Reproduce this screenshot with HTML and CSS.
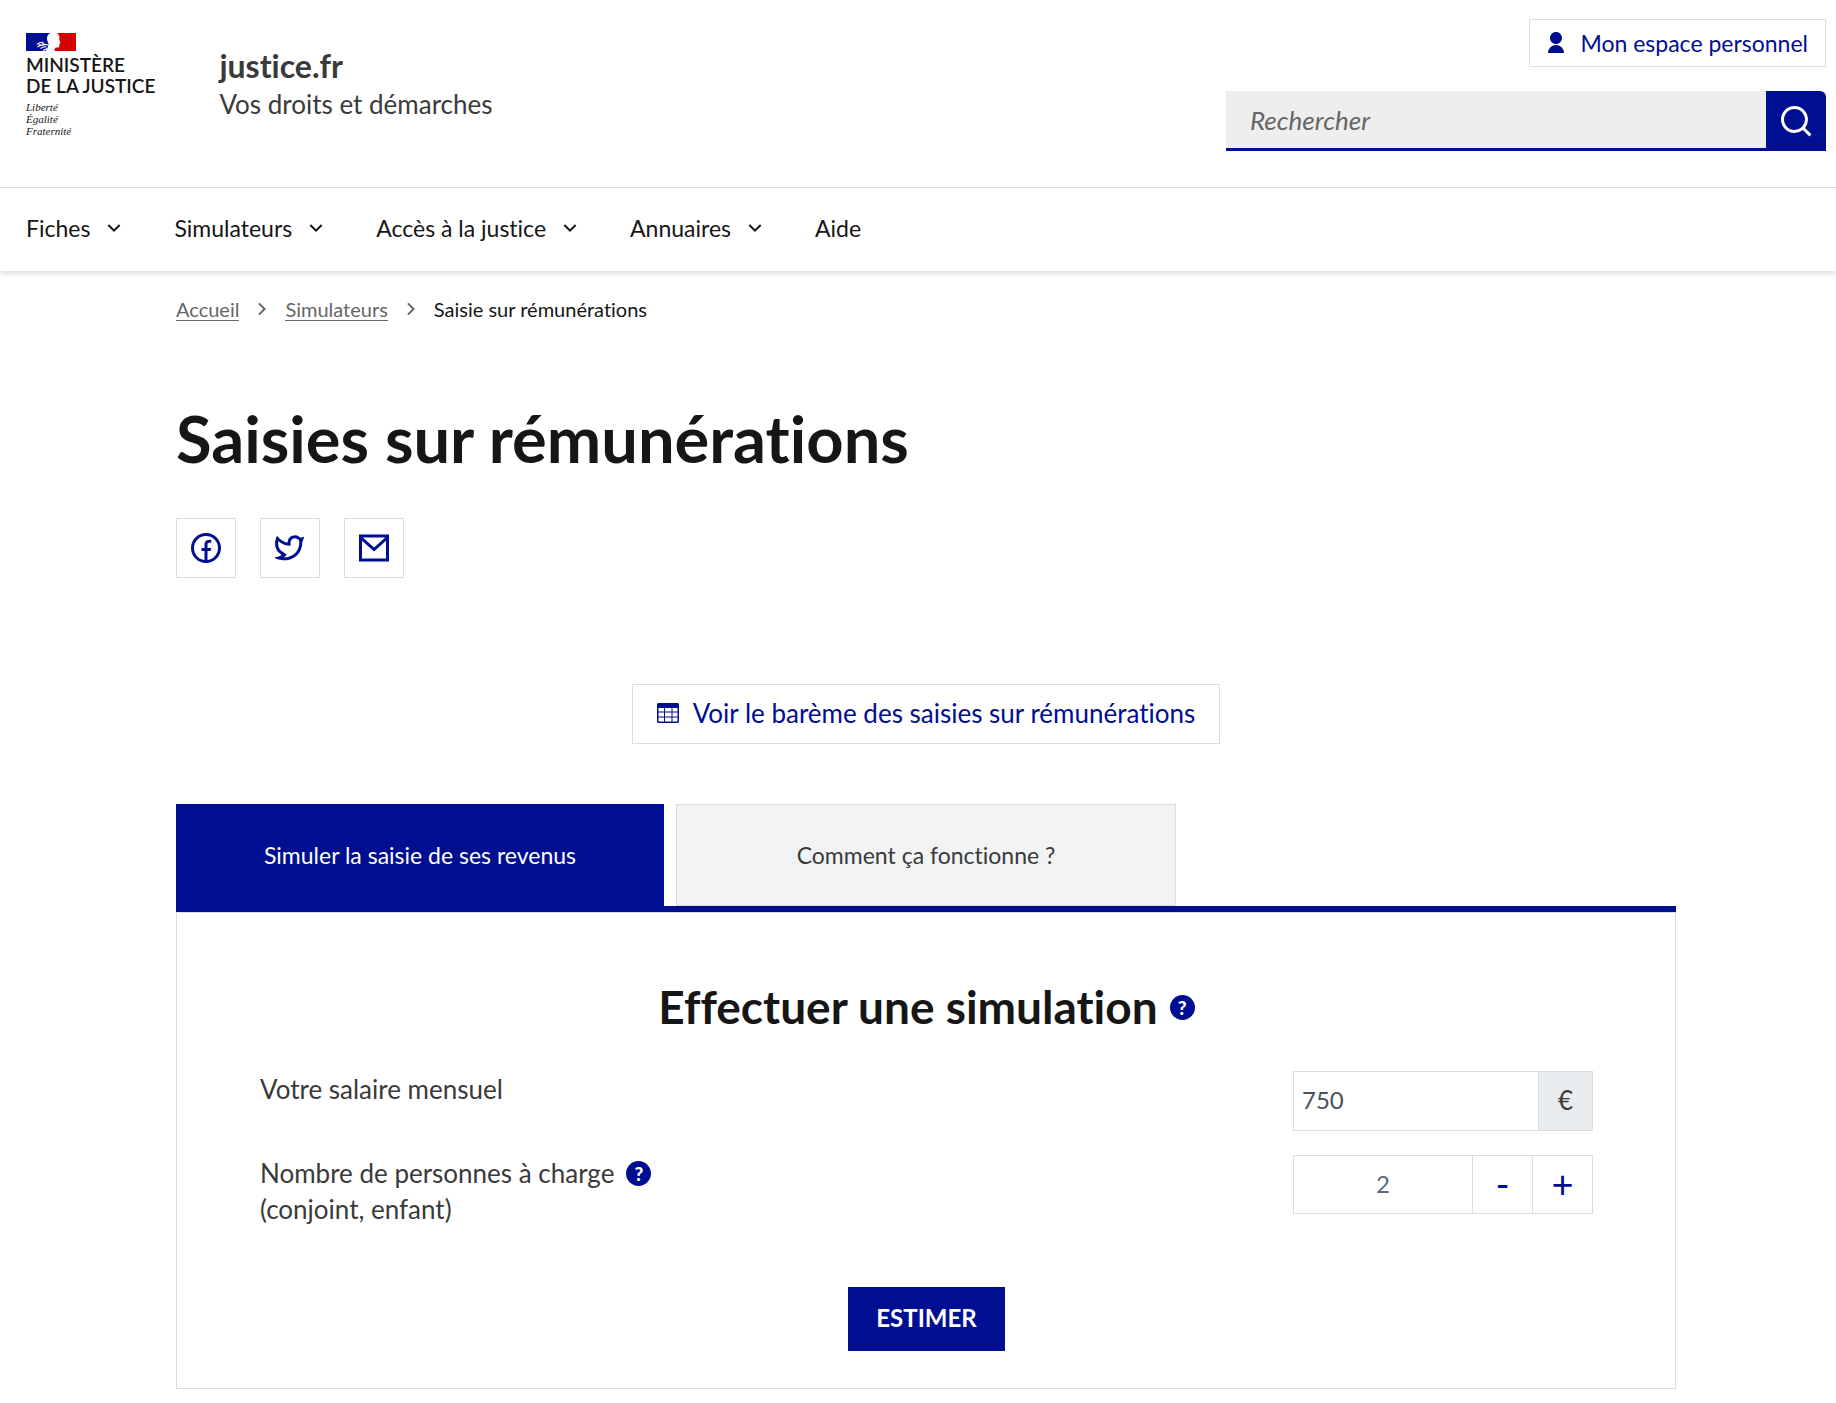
FILE: index.html
```html
<!DOCTYPE html>
<html lang="fr">
<head>
  <meta charset="UTF-8">
  <meta name="viewport" content="width=device-width, initial-scale=1">
  <title>Saisies sur rémunérations | justice.fr</title>
  <link rel="stylesheet" href="styles.css">
</head>
<body>

  <header class="header">
    <div class="header-body">
      <div class="brand">
        <div class="logo">
          <svg class="flag" viewBox="0 0 50 18" aria-hidden="true">
            <path fill="#000e91" d="M0 0h24c-2 1.500-3.300 3.500-3 6 .2 2 1.200 3.500 1.500 5l-1 4-2 3H0z"/>
            <path fill="#d90000" d="M50 0v18H28.500c-.3-1.500.3-3 1.500-3.500 1.500-.3 3 .2 3.300-.8l-.2-1.500.7-.8-.3-1.200 1-.7-1.300-2.700.3-2.300C33.300 2.500 32.500 1 31 0z"/>
            <path fill="none" stroke="#fff" stroke-width="1.100" d="M11 11.500c2-2 4-2.500 6.500-2.200M11.500 14c2-2 4-2.500 8-2M13 11.500l3.500 1M14.500 15.500c2-1.500 4-2 6-1.500M16 10.500l6 1.500M17 17.500l4-2"/>
          </svg>
          <p class="ministry">MINISTÈRE<br>DE LA JUSTICE</p>
          <p class="motto">Liberté<br>Égalité<br>Fraternité</p>
        </div>
        <div class="service">
          <p class="service-title">justice.fr</p>
          <p class="service-tagline">Vos droits et démarches</p>
        </div>
      </div>

      <div class="tools">
        <a class="account" href="#">
          <svg class="icon-24" viewBox="0 0 24 24" aria-hidden="true"><path d="M4 22a8 8 0 1 1 16 0H4zm8-9c-3.315 0-6-2.685-6-6s2.685-6 6-6 6 2.685 6 6-2.685 6-6 6z"/></svg>
          Mon espace personnel
        </a>
        <form class="search">
          <input type="search" placeholder="Rechercher" aria-label="Rechercher">
          <button type="button" aria-label="Lancer la recherche">
            <svg class="icon-36" viewBox="0 0 24 24" aria-hidden="true"><path d="M18.031 16.617l4.283 4.282-1.415 1.415-4.282-4.283A8.960 8.960 0 0 1 11 20c-4.968 0-9-4.032-9-9s4.032-9 9-9 9 4.032 9 9a8.960 8.960 0 0 1-1.969 5.617zm-2.006-.742A6.977 6.977 0 0 0 18 11c0-3.868-3.133-7-7-7-3.868 0-7 3.132-7 7 0 3.867 3.132 7 7 7a6.977 6.977 0 0 0 4.875-1.975l.15-.15z"/></svg>
          </button>
        </form>
      </div>
    </div>

    <nav class="nav" aria-label="Menu principal">
      <button type="button">Fiches <svg class="icon-24" viewBox="0 0 24 24"><path d="M12 13.172l4.950-4.950 1.414 1.414L12 16 5.636 9.636 7.050 8.222z"/></svg></button>
      <button type="button">Simulateurs <svg class="icon-24" viewBox="0 0 24 24"><path d="M12 13.172l4.950-4.950 1.414 1.414L12 16 5.636 9.636 7.050 8.222z"/></svg></button>
      <button type="button">Accès à la justice <svg class="icon-24" viewBox="0 0 24 24"><path d="M12 13.172l4.950-4.950 1.414 1.414L12 16 5.636 9.636 7.050 8.222z"/></svg></button>
      <button type="button">Annuaires <svg class="icon-24" viewBox="0 0 24 24"><path d="M12 13.172l4.950-4.950 1.414 1.414L12 16 5.636 9.636 7.050 8.222z"/></svg></button>
      <a href="#">Aide</a>
    </nav>
  </header>

  <main class="container">
    <nav class="breadcrumb" aria-label="Fil d'Ariane">
      <a href="#">Accueil</a>
      <svg class="icon-24" viewBox="0 0 24 24"><path d="M13.172 12l-4.950-4.950 1.414-1.414L16 12l-6.364 6.364-1.414-1.414z"/></svg>
      <a href="#">Simulateurs</a>
      <svg class="icon-24" viewBox="0 0 24 24"><path d="M13.172 12l-4.950-4.950 1.414-1.414L16 12l-6.364 6.364-1.414-1.414z"/></svg>
      <span>Saisie sur rémunérations</span>
    </nav>

    <h1>Saisies sur rémunérations</h1>

    <div class="share">
      <a href="#" aria-label="Partager sur Facebook">
        <svg class="icon-36" viewBox="0 0 24 24"><path d="M13 19.938A8.001 8.001 0 0 0 12 4a8 8 0 0 0-1 15.938V14H9v-2h2v-1.654c0-1.337.14-1.822.4-2.311A2.726 2.726 0 0 1 12.536 6.900c.382-.205.857-.328 1.687-.381.329-.021.755.005 1.278.080v1.900H15c-.917 0-1.296.043-1.522.164a.727.727 0 0 0-.314.314c-.12.226-.164.450-.164 1.368V12h2.500l-.5 2h-2v5.938zM12 22C6.477 22 2 17.523 2 12S6.477 2 12 2s10 4.477 10 10-4.477 10-10 10z"/></svg>
      </a>
      <a href="#" aria-label="Partager sur Twitter">
        <svg class="icon-36" viewBox="0 0 24 24"><path d="M15.300 5.550a2.900 2.900 0 0 0-2.900 2.847l-.028 1.575a.6.6 0 0 1-.68.583l-1.561-.212c-2.054-.28-4.022-1.226-5.910-2.799-.598 3.310.570 5.603 3.383 7.372l1.747 1.098a.6.6 0 0 1 .034.993L7.793 18.170c.947.059 1.846.017 2.592-.131 4.718-.942 7.855-4.492 7.855-10.348 0-.478-1.012-2.141-2.940-2.141zm-4.900 2.810a4.900 4.900 0 0 1 8.385-3.355c.711-.005 1.316.175 2.669-.645-.335 1.640-.5 2.352-1.214 3.331 0 7.642-4.697 11.358-9.463 12.309-3.268.652-8.020-.419-9.382-1.841.694-.054 3.514-.357 5.144-1.550C5.160 15.700-.329 12.470 3.278 3.786c1.693 1.977 3.410 3.323 5.150 4.037 1.158.475 1.442.465 1.973.538z"/></svg>
      </a>
      <a href="#" aria-label="Partager par courriel">
        <svg class="icon-36" viewBox="0 0 24 24"><path d="M2 3h20v18H2zm18 4.238l-7.928 7.100L4 7.216V19h16V7.238zM4.511 5l7.550 6.662L19.502 5H4.511z"/></svg>
      </a>
    </div>

    <a class="scale-link" href="#">
      <svg class="table-icon" viewBox="0 0 22 20" aria-hidden="true">
        <path d="M1 0h20l1 1v18l-1 1H1l-1-1V1zM1.500 5v3.500H7V5zM8 5v3.500h6.500V5zm7.500 0v3.500h5V5zM1.500 9.500v4H7v-4zm6.500 0v4h6.500v-4zm7.500 0v4h5v-4zM1.500 14.500v4H7v-4zm6.500 0v4h6.500v-4zm7.500 0v4h5v-4z" fill-rule="evenodd"/>
      </svg>
      Voir le barème des saisies sur rémunérations
    </a>

    <div class="tabs" role="tablist">
      <button class="tab active" type="button" role="tab" aria-selected="true">Simuler la saisie de ses revenus</button>
      <button class="tab" type="button" role="tab" aria-selected="false">Comment ça fonctionne ?</button>
    </div>

    <form class="panel">
      <div class="panel-title">
        <h2>Effectuer une simulation</h2>
        <button class="help" type="button" aria-label="Aide sur la simulation">?</button>
      </div>

      <div class="row">
        <label for="salaire">Votre salaire mensuel</label>
        <div class="field">
          <input type="text" id="salaire" inputmode="decimal" value="750">
          <span class="unit">€</span>
        </div>
      </div>

      <div class="row">
        <div class="row-label">
          <label for="personnes">Nombre de personnes à charge<br>(conjoint, enfant)</label>
          <button class="help" type="button" aria-label="Aide sur les personnes à charge">?</button>
        </div>
        <div class="field counter">
          <input type="text" id="personnes" inputmode="numeric" value="2">
          <button type="button" id="moins" aria-label="Retirer une personne">-</button>
          <button type="button" id="plus" aria-label="Ajouter une personne">+</button>
        </div>
      </div>

      <button class="submit" type="button">ESTIMER</button>
    </form>
  </main>

  <script>
    const personnes = document.getElementById("personnes");

    function changePersonnes(step) {
      const current = parseInt(personnes.value) || 0;
      personnes.value = Math.max(0, current + step);
    }

    document.getElementById("moins").onclick = () => changePersonnes(-1);
    document.getElementById("plus").onclick = () => changePersonnes(1);
  </script>

</body>
</html>
```
FILE: styles.css
```css
:root {
  --blue: #000e91;
  --border: #dddddd;
  --title: #161616;
  --text: #3a3a3a;
}

* {
  box-sizing: border-box;
}

body {
  margin: 0;
  background: #ffffff;
  color: var(--text);
  font-family: Lato, sans-serif;
  font-size: 26px;
  font-variant-ligatures: none;
  line-height: 36px;
}

p, h1, h2 {
  margin: 0;
}

a {
  color: inherit;
  text-decoration: none;
}

button, input {
  margin: 0;
  padding: 0;
  border: none;
  border-radius: 0;
  background: none;
  color: inherit;
  font-family: inherit;
  font-size: inherit;
  font-variant-ligatures: inherit;
  line-height: inherit;
}

button {
  cursor: pointer;
}

svg {
  display: block;
  flex: none;
  fill: currentColor;
}

.icon-24 {
  width: 24px;
  height: 24px;
}

.icon-36 {
  width: 36px;
  height: 36px;
}

/* Header */

.header {
  box-shadow: 0 2px 6px rgba(0, 0, 0, 0.16);
}

.header-body {
  display: flex;
  justify-content: space-between;
  padding: 19px 10px 36px 26px;
  border-bottom: 1px solid var(--border);
}

.brand {
  display: flex;
  gap: 64px;
  padding-top: 14px;
}

.flag {
  width: 50px;
  height: 18px;
}

.ministry {
  margin-top: 3px;
  color: var(--title);
  font-size: 19px;
  font-weight: 600;
  line-height: 21px;
}

.motto {
  margin-top: 5px;
  color: var(--title);
  font-family: "Liberation Serif", serif;
  font-size: 11px;
  font-style: italic;
  line-height: 12px;
}

.service {
  padding-top: 13px;
}

.service-title {
  font-size: 32px;
  font-weight: 700;
  line-height: 40px;
}

.tools {
  display: flex;
  flex-direction: column;
  align-items: flex-end;
  gap: 24px;
  width: 600px;
}

.account {
  display: flex;
  align-items: center;
  gap: 12px;
  height: 48px;
  padding: 0 17px 0 14px;
  border: 1px solid var(--border);
  color: var(--blue);
  font-size: 23px;
}

.search {
  display: flex;
  width: 100%;
  height: 60px;
}

.search input {
  flex: 1;
  min-width: 0;
  padding: 0 24px;
  border-bottom: 3px solid var(--blue);
  background: #eeeeee;
}

.search input::placeholder {
  color: #666666;
  font-style: italic;
  opacity: 1;
}

.search button {
  display: flex;
  align-items: center;
  justify-content: center;
  width: 60px;
  border-radius: 0 6px 0 0;
  background: var(--blue);
  color: #ffffff;
}

.nav {
  display: flex;
  align-items: center;
  gap: 48px;
  height: 83px;
  padding: 0 26px 3px;
  color: var(--title);
  font-size: 23px;
}

.nav button {
  display: flex;
  align-items: center;
  gap: 12px;
}

/* Content */

.container {
  padding: 0 160px 14px 176px;
}

.breadcrumb {
  display: flex;
  align-items: center;
  gap: 11px;
  padding-top: 20px;
  color: #666666;
  font-size: 20px;
}

.breadcrumb a {
  border-bottom: 1px solid #666666;
  line-height: 22px;
}

.breadcrumb span {
  color: var(--title);
}

h1 {
  margin-top: 71px;
  color: var(--title);
  font-size: 65px;
  font-weight: 700;
  line-height: 80px;
}

.share {
  display: flex;
  gap: 24px;
  margin-top: 40px;
}

.share a {
  display: flex;
  align-items: center;
  justify-content: center;
  width: 60px;
  height: 60px;
  border: 1px solid var(--border);
  color: var(--blue);
}

.scale-link {
  display: flex;
  align-items: center;
  gap: 14px;
  width: fit-content;
  height: 60px;
  margin: 106px auto 60px;
  padding: 0 24px 2px;
  border: 1px solid var(--border);
  color: var(--blue);
}

.table-icon {
  width: 22px;
  height: 20px;
}

.tabs {
  display: flex;
  gap: 12px;
  border-bottom: 6px solid var(--blue);
}

.tab {
  width: 500px;
  height: 102px;
  border: 1px solid var(--border);
  background: #f1f3f5;
  font-size: 23px;
}

.tab.active {
  width: 488px;
  border-color: var(--blue);
  background: var(--blue);
  color: #ffffff;
}

.panel {
  padding: 64px 82px 37px 83px;
  border: 1px solid var(--border);
}

.panel-title {
  display: flex;
  align-items: center;
  justify-content: center;
  gap: 12px;
  margin-bottom: 34px;
}

h2 {
  color: var(--title);
  font-size: 46px;
  font-weight: 700;
  line-height: 60px;
}

.help {
  width: 25px;
  height: 25px;
  border-radius: 50%;
  background: var(--blue);
  color: #ffffff;
  font-size: 19px;
  font-weight: 900;
  line-height: 25px;
}

.row {
  display: flex;
  justify-content: space-between;
  margin-bottom: 24px;
}

.row-label {
  display: flex;
  gap: 12px;
}

.row-label .help {
  margin-top: 6px;
}

.field {
  display: flex;
  width: 300px;
  height: 60px;
  border: 1px solid var(--border);
}

.field input {
  flex: 1;
  min-width: 0;
  padding: 0 8px 2px;
  color: #495057;
  font-size: 24px;
}

.unit {
  display: flex;
  align-items: center;
  justify-content: center;
  width: 54px;
  padding-bottom: 2px;
  border-left: 1px solid var(--border);
  background: #e9ecef;
}

.counter {
  height: 59px;
}

.counter input {
  color: #5c6780;
  text-align: center;
}

.counter button {
  width: 60px;
  padding-bottom: 4px;
  border-left: 1px solid var(--border);
  color: var(--blue);
  font-size: 38px;
}

.submit {
  display: block;
  height: 64px;
  margin: 60px auto 0;
  padding: 0 28px 2px;
  background: var(--blue);
  color: #ffffff;
  font-size: 24px;
  font-weight: 700;
}
```
